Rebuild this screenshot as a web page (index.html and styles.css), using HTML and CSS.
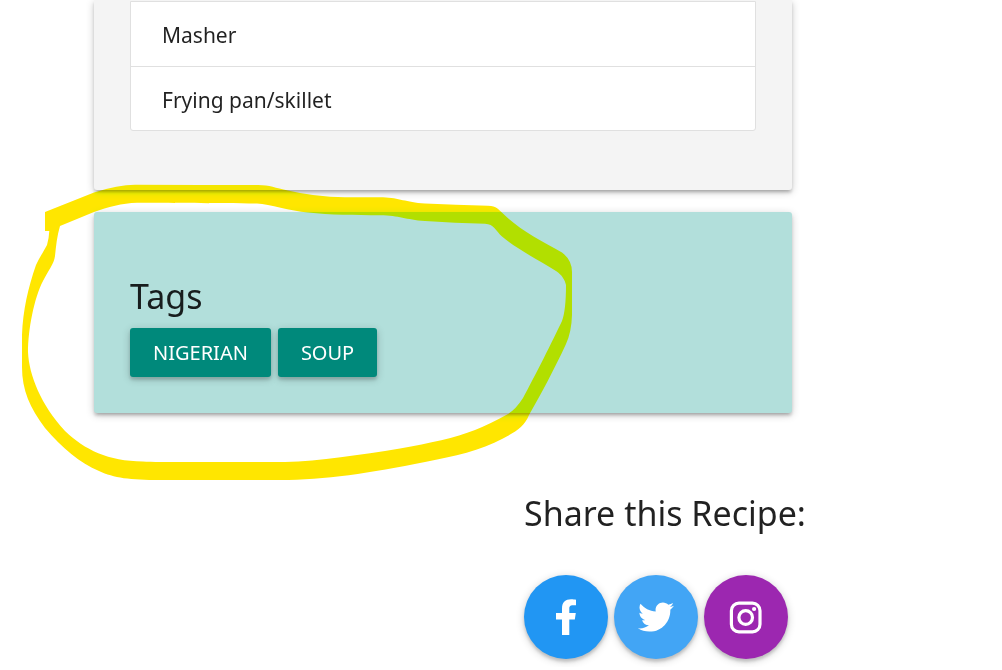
FILE: index.html
```html
<!DOCTYPE html>
<html lang="en">
<head>
  <meta charset="utf-8">
  <meta name="viewport" content="width=device-width, initial-scale=1">
  <title>Recipe</title>
  <link rel="stylesheet" href="styles.css">
</head>
<body>
  <main class="recipe">
    <section class="card card-tools" aria-label="Tools">
      <ul class="collection">
        <li class="collection-item">Masher</li>
        <li class="collection-item">Frying pan/skillet</li>
      </ul>
    </section>

    <section class="card card-tags">
      <h2 class="heading">Tags</h2>
      <div class="tags">
        <a class="btn" href="#nigerian">Nigerian</a>
        <a class="btn" href="#soup">Soup</a>
      </div>
    </section>

    <section class="share">
      <h2 class="heading">Share this Recipe:</h2>
      <div class="share-links">
        <a class="share-btn facebook" href="#facebook" aria-label="Facebook">
          <svg width="36" height="36" viewBox="0 0 36 36" aria-hidden="true"><path fill="#fff" d="M14 36V20.500H8V14H14V9.500C14 3 17.500 0.300 23 0.300C25 0.300 27 0.500 28 0.700V6.200H25C22 6.200 21.300 7.700 21.300 9.700V14H27.800L26.800 20.500H21.300V36Z"/></svg>
        </a>
        <a class="share-btn twitter" href="#twitter" aria-label="Twitter">
          <svg width="36" height="36" viewBox="0 0 512 512" aria-hidden="true"><path fill="#fff" d="M459.370 151.716c.325 4.548.325 9.097.325 13.645 0 138.720-105.583 298.558-298.558 298.558-59.452 0-114.680-17.219-161.137-47.106 8.447.974 16.568 1.299 25.340 1.299 49.055 0 94.213-16.568 130.274-44.832-46.132-.975-84.792-31.188-98.112-72.772 6.498.974 12.995 1.624 19.818 1.624 9.421 0 18.843-1.300 27.614-3.573-48.081-9.747-84.143-51.980-84.143-102.985v-1.299c13.969 7.797 30.214 12.670 47.431 13.319-28.264-18.843-46.781-51.005-46.781-87.391 0-19.492 5.197-37.360 14.294-52.954 51.655 63.675 129.300 105.258 216.365 109.807-1.624-7.797-2.599-15.918-2.599-24.040 0-57.828 46.782-104.934 104.934-104.934 30.213 0 57.502 12.670 76.670 33.137 23.715-4.548 46.456-13.320 66.599-25.340-7.798 24.366-24.366 44.833-46.132 57.827 21.117-2.273 41.584-8.122 60.426-16.243-14.292 20.791-32.161 39.308-52.628 54.253z"/></svg>
        </a>
        <a class="share-btn instagram" href="#instagram" aria-label="Instagram">
          <svg width="36" height="36" viewBox="0 0 36 36" aria-hidden="true"><rect x="3.400" y="4.200" width="28.600" height="28.600" rx="7.500" fill="none" stroke="#fff" stroke-width="3.200"/><circle cx="17.700" cy="18.500" r="6.800" fill="none" stroke="#fff" stroke-width="3.200"/><circle cx="26.100" cy="10" r="2.100" fill="#fff"/></svg>
        </a>
      </div>
    </section>
  </main>

  <svg class="highlight" width="600" height="500" viewBox="0 0 600 500" aria-hidden="true">
    <path fill="#ffe600" fill-rule="evenodd" d="M45 212L94 192.500Q118 184.700 135 184.700L200 185H258C270 185 275 188 288 190.500Q315 197 345 197.200H383C400 198 405 202 425 203.500Q455 205 488 205.700C497 206 498 209 504 214.500C520 230 540 240 562 252.500Q572 260 572 272V315Q571.500 332 566 344C554 370 541 394 529 415C524 427 517 431 503 438.500C480 451 455 456 425 462C370 473 325 480 280 480H160C130 480 114 478 99 471C80 463 62 448 45 428C30 408 22 390 22 367V335C23 310 28 288 36 265C39 258 44 251 47 245Q49 238 49.300 231H45Z
    M60 226C57 236 56 246 55 256C54 264 48 271 43 281C34 298 28 330 28 352C29 375 41 405 65 431C85 450 108 461 143 461.500C150 462 170 462 190 462H285C320 461 360 455 400 448.500C430 443 455 438 475 430Q490 424 508 414Q516 409 523 398C535 376 553 340 562 321Q566 310 566 285C565 280 562 275 556 271C540 261 515 248 502 236.500C496 231 494 224 485 223.700Q455 223 425 221C405 219.500 400 215.500 380 215.200C355 215 330 215 308 212.500C290 211 270 204 257 203.500C220 203 165 203 137 202.700C122 203 108 207 94 212Z"/>
  </svg>
</body>
</html>
```
FILE: styles.css
```css
* {
  box-sizing: border-box;
}

body {
  margin: 0;
  background: #fff;
  color: rgba(0, 0, 0, 0.87);
  font-family: "Segoe UI", "Noto Sans", "Open Sans", sans-serif;
  font-size: 21px;
  line-height: 32px;
}

.recipe {
  padding: 0 210px 8px 94px;
}

.card {
  margin-bottom: 22px;
  padding: 36px;
  border-radius: 3px;
  box-shadow: 0 3px 3px 0 rgba(0, 0, 0, 0.14),
    0 4px 2px -3px rgba(0, 0, 0, 0.12),
    0 2px 8px 0 rgba(0, 0, 0, 0.2);
}

.card-tools {
  padding-top: 1px;
  padding-bottom: 59px;
  border-radius: 0 0 3px 3px;
  background: #f4f4f4;
}

.collection {
  margin: 0;
  padding: 0;
  list-style: none;
  background: #fff;
  border: 1px solid #e0e0e0;
  border-radius: 0 0 3px 3px;
}

.collection-item {
  padding: 17px 31px 15px;
}

.collection-item:last-child {
  padding-bottom: 14px;
}

.collection-item + .collection-item {
  border-top: 1px solid #e0e0e0;
}

.heading {
  margin: 0;
  font-size: 34px;
  font-weight: 400;
  line-height: 40px;
}

.card-tags {
  padding-top: 64px;
  background: #b2dfdb;
}

.tags {
  display: flex;
  flex-wrap: wrap;
  gap: 7px;
  margin-top: 12px;
}

.btn {
  padding: 9px 23px 8px;
  border-radius: 3px;
  background: #00897b;
  color: #fff;
  font-size: 20px;
  text-decoration: none;
  text-transform: uppercase;
  box-shadow: 0 3px 3px 0 rgba(0, 0, 0, 0.14),
    0 2px 8px 0 rgba(0, 0, 0, 0.2);
}

.share {
  margin-top: 80px;
  margin-left: 430px;
  white-space: nowrap;
}

.share-links {
  display: flex;
  gap: 6px;
  margin-top: 42px;
}

.share-btn {
  display: grid;
  flex: none;
  place-items: center;
  width: 84px;
  height: 84px;
  border-radius: 50%;
  box-shadow: 0 3px 3px 0 rgba(0, 0, 0, 0.14),
    0 2px 8px 0 rgba(0, 0, 0, 0.2);
}

.facebook {
  background: #2196f3;
}

.twitter {
  background: #42a5f5;
}

.instagram {
  background: #9c27b0;
}

.highlight {
  position: absolute;
  top: 0;
  left: 0;
  mix-blend-mode: darken;
  pointer-events: none;
}
```
